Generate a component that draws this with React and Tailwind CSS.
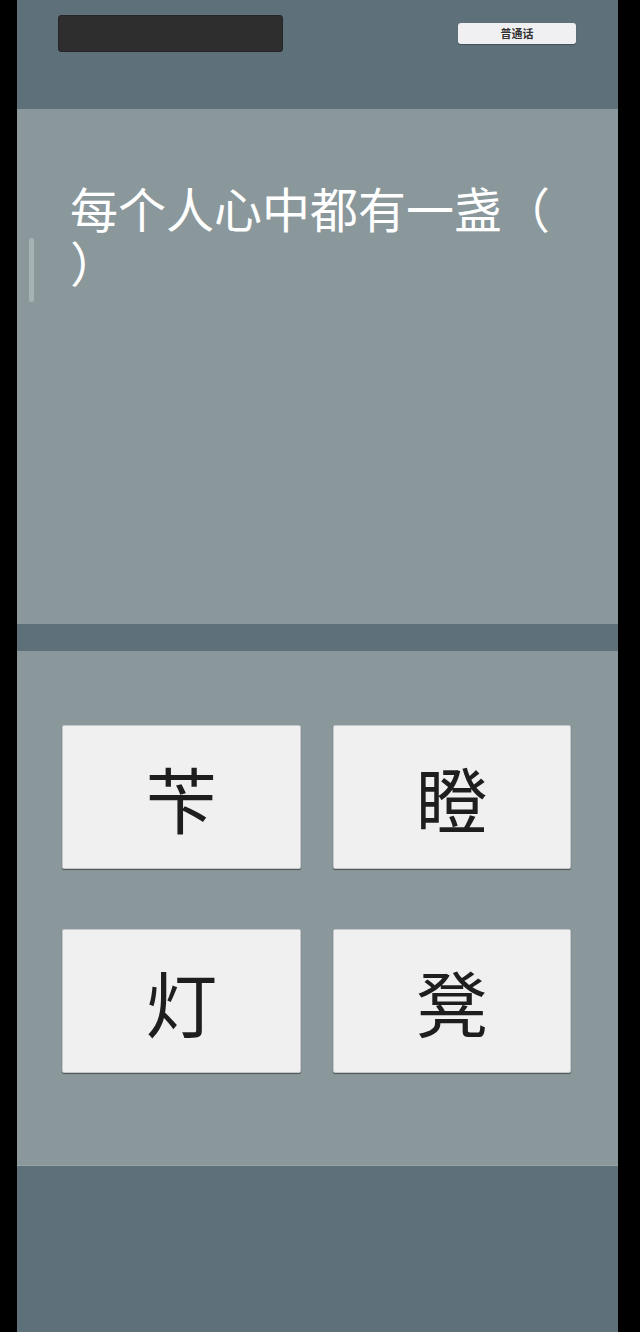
import React from "react";

const choices = ["苄", "瞪", "灯", "凳"];

export default function App() {
    return (
        <div className="min-h-[1332px] w-[640px] bg-black flex" style={{ fontFamily: '"Noto Sans CJK SC", "Noto Sans", sans-serif' }}>
            <div className="ml-[17px] w-[601px] bg-[#5e717a] flex flex-col">
                {/* header */}
                <div className="h-[109px] flex items-start justify-between pl-[41px] pr-[42px] pt-[15px]">
                    <div className="w-[225px] h-[37px] rounded-[3px] bg-[#2e2e2e] border border-[#262626]" />
                    <button className="mt-[8px] w-[118px] h-[21px] rounded-[3px] bg-[#f0f0f2] text-[11px] font-bold text-[#333] leading-none shadow-[0_1px_1px_rgba(0,0,0,0.3)]">
                        普通话
                    </button>
                </div>

                {/* question */}
                <div className="relative h-[515px] bg-[#8a979b] px-[53px] pt-[71px]">
                    <div className="absolute left-[12px] top-[129px] w-[5px] h-[64px] rounded-full bg-[#a7b2b5]" />
                    <p className="text-[48px] leading-[54px] text-white">每个人心中都有一盏（ ）</p>
                </div>

                <div className="h-[27px]" />

                {/* answers */}
                <div className="h-[515px] bg-[#8a979b] pl-[45px] pr-[47px] pt-[74px] border-b border-[#97a3a7]">
                    <div className="grid grid-cols-2 gap-x-[32px] gap-y-[60px]">
                        {choices.map((c) => (
                            <button
                                key={c}
                                className="h-[144px] bg-[#f0f0f0] rounded-[2px] border border-[#c4c8ca] shadow-[0_1px_1px_rgba(0,0,0,0.45)] flex items-center justify-center text-[72px] leading-none text-[#1e1e1e]"
                            >
                                {c}
                            </button>
                        ))}
                    </div>
                </div>

                <div className="flex-1" />
            </div>
        </div>
    );
}
